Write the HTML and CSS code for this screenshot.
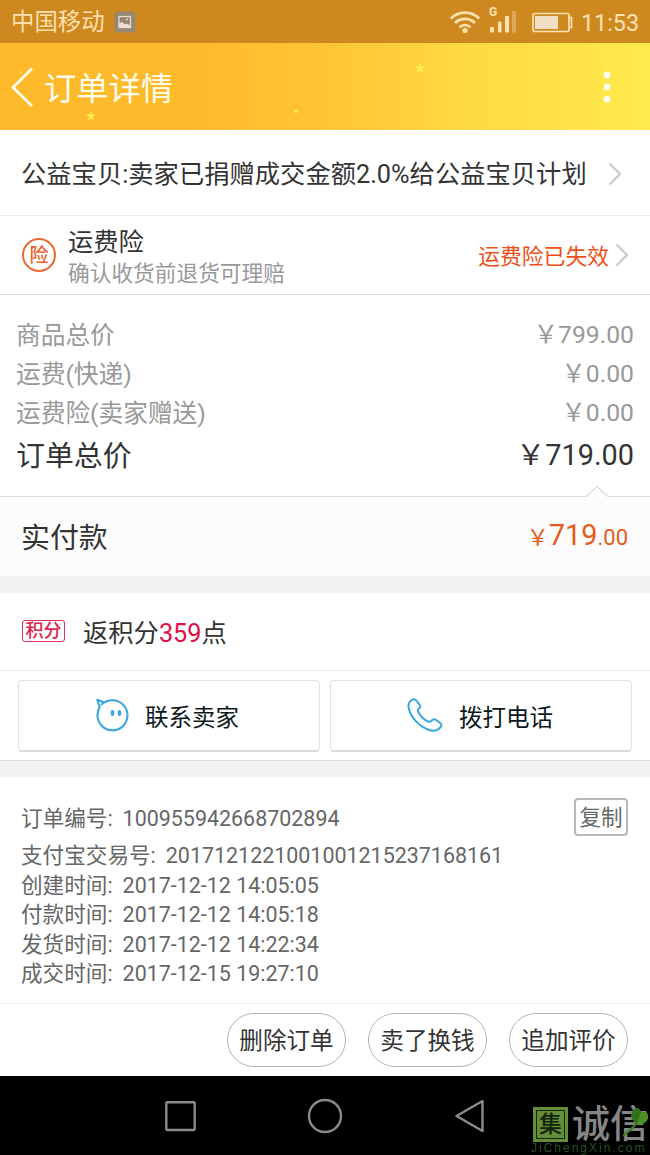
FILE: index.html
```html
<!DOCTYPE html>
<html lang="zh-CN">
<head>
<meta charset="utf-8">
<title>订单详情</title>
<link rel="stylesheet" href="styles.css">
</head>
<body>
<div class="screen">
  <div class="status">
    <span class="carrier">中国移动</span>
    <svg class="shot" width="22" height="22" viewBox="0 0 22 22"><rect x=".5" y=".5" width="21" height="21" rx="4" fill="#968770"/><rect x="5" y="5.500" width="11.500" height="11" fill="none" stroke="#eadfce" stroke-width="1.300"/><path d="M5 12.500l3-1.500 3 2.500 2-1 3 2v2H5z" fill="#eadfce"/><circle cx="13" cy="8.500" r="1" fill="#eadfce"/></svg>
    <div class="signals">
      <svg width="200" height="43" viewBox="0 0 200 43">
        <g fill="none" stroke="#ffe2b0" stroke-width="2.700"><path d="M.8 18.500a20 20 0 0 1 28.400 0"/><path d="M5 23a14 14 0 0 1 20 0"/><path d="M9.500 27.200a8 8 0 0 1 11 0"/></g>
        <circle cx="15" cy="30.500" r="2.600" fill="#ffe2b0"/>
        <g fill="#ffe2b0"><rect x="40" y="27" width="4" height="5.500" rx="1"/><rect x="48" y="21.500" width="3.500" height="11" rx="1"/><rect x="55" y="16" width="4" height="16.500" rx="1"/></g>
        <rect x="62" y="11" width="4" height="21.500" fill="#dda956"/>
        <rect x="83" y="13.500" width="36" height="18" rx="2" fill="none" stroke="#ffe2b0" stroke-width="1.700"/>
        <path d="M119 17.500h2.500v10H119" fill="none" stroke="#ffe2b0" stroke-width="1.700"/>
        <rect x="85" y="16" width="23" height="13" fill="#f3dfc3"/>
        <text class="net" x="39" y="16">G</text>
        <text class="clock" x="131" y="31" textLength="58" lengthAdjust="spacingAndGlyphs">11:53</text>
      </svg>
    </div>
  </div>

  <div class="header">
    <svg class="back" width="22" height="42" viewBox="0 0 22 42"><path d="M21 2.500L2 21.500l19 18.500" fill="none" stroke="#fffef0" stroke-width="2.600"/></svg>
    <h1>订单详情</h1>
    <svg class="more" width="8" height="32" viewBox="0 0 8 32"><g fill="#fffef0"><circle cx="4" cy="4" r="3.400"/><circle cx="4" cy="16" r="3.400"/><circle cx="4" cy="28.300" r="3.400"/></g></svg>
    <svg class="stars" width="650" height="87" viewBox="0 0 650 87">
      <defs><path id="star" d="M0-5l1.400 3.200 3.600.3-2.700 2.400.8 3.500L0 2.600l-3.100 1.800.8-3.500L-5-1.500l3.600-.3z"/></defs>
      <use href="#star" x="91" y="73" fill="#ffe94f"/>
      <use href="#star" x="420" y="25" fill="#fff05a"/>
      <use href="#star" x="607" y="13" fill="#fff04d" opacity=".6"/>
      <path d="M293 69.500q3-6 6 0z" fill="#ffe94f"/><path d="M18 28l4 1-1 2z" fill="#ffe94f"/>
    </svg>
  </div>

  <div class="charity">
    <span>公益宝贝:卖家已捐赠成交金额2.0%给公益宝贝计划</span>
    <svg width="14" height="24" viewBox="0 0 14 24"><path d="M1.500 1.500L12 12 1.500 22.500" fill="none" stroke="#cbcbcb" stroke-width="2.300"/></svg>
  </div>

  <div class="insurance">
    <span class="seal">险</span>
    <div class="cover"><div class="cover-name">运费险</div><div class="cover-note">确认收货前退货可理赔</div></div>
    <span class="expired">运费险已失效</span>
    <svg width="14" height="24" viewBox="0 0 14 24"><path d="M1.500 1.500L12 12 1.500 22.500" fill="none" stroke="#cbcbcb" stroke-width="2.300"/></svg>
  </div>

  <div class="prices">
    <div class="price"><span>商品总价</span><span class="sum">￥799.00</span></div>
    <div class="price"><span>运费(快递)</span><span class="sum">￥0.00</span></div>
    <div class="price"><span>运费险(卖家赠送)</span><span class="sum">￥0.00</span></div>
    <div class="price total"><span>订单总价</span><span class="sum">￥719.00</span></div>
  </div>

  <div class="paid">
    <svg class="notch" width="24" height="13" viewBox="0 0 24 13"><path d="M1 12L12 1.500 23 12v1H1z" fill="#fcfcfc"/><path d="M1 11.500L12 1.500l11 10" fill="none" stroke="#dcdcdc" stroke-width="1.200"/></svg>
    <span>实付款</span>
    <span class="amount">￥<b>719</b>.00</span>
  </div>

  <div class="points"><span class="tag">积分</span><span>返积分<em>359</em>点</span></div>

  <div class="contact">
    <div class="call">
      <svg width="34" height="34" viewBox="0 0 34 34"><path d="M6.500 6.500Q11 2.300 17.500 2.300A15 15 0 1 1 2.500 17.300q0-4.500 2.200-8L2.300 1.800 8.500 4.200" fill="none" stroke="#3aa5df" stroke-width="2.100" stroke-linejoin="round" stroke-linecap="round"/><ellipse cx="17.500" cy="15" rx="1.800" ry="3" fill="#3aa5df"/><ellipse cx="24.500" cy="15" rx="1.800" ry="3" fill="#3aa5df"/></svg>
      <span>联系卖家</span>
    </div>
    <div class="call">
      <svg width="36" height="34" viewBox="0 0 36 34"><path d="M4 2.500Q7-.2 9.300 2.500l3.500 4.700q1 1.500-.4 2.800c-2 1.500-2 2.500-.7 4.700 2 3.500 5.200 6.800 9 8.600 1.700.8 2.800.5 4-.8 1.300-1.500 2.700-1.600 4-.7l4.200 3q2.500 2 .7 4.200C31 32.300 27 33.400 23 32.200 12.500 29 3.500 19.500 1.600 9.500 1 6.500 2 4 4 2.500z" fill="none" stroke="#3aa5df" stroke-width="2"/></svg>
      <span>拨打电话</span>
    </div>
  </div>

  <div class="details">
    <div class="first"><span>订单编号:</span><span class="value">100955942668702894</span><span class="copy">复制</span></div>
    <div><span>支付宝交易号:</span><span class="value">2017121221001001215237168161</span></div>
    <div><span>创建时间:</span><span class="value">2017-12-12 14:05:05</span></div>
    <div><span>付款时间:</span><span class="value">2017-12-12 14:05:18</span></div>
    <div><span>发货时间:</span><span class="value">2017-12-12 14:22:34</span></div>
    <div><span>成交时间:</span><span class="value">2017-12-15 19:27:10</span></div>
  </div>

  <div class="actions"><span>删除订单</span><span>卖了换钱</span><span>追加评价</span></div>

  <div class="nav">
    <svg width="650" height="79" viewBox="0 0 650 79"><g fill="none" stroke="#8a8a8a" stroke-width="2.400" stroke-linejoin="round"><rect x="166.300" y="26.300" width="28.400" height="27.700" rx="1"/><circle cx="325" cy="40" r="16"/><path d="M456.500 40L482.500 25v30z"/></g></svg>
    <div class="mark">
      <div class="mark-top"><span class="mark-logo">集</span><span class="mark-name">诚信</span></div>
      <div class="mark-url">JiChengXin.com</div>
      <svg class="leaf" width="28" height="32" viewBox="0 0 28 32"><path d="M1 30Q9 24 15 17" fill="none" stroke="#3c7a20" stroke-width="2"/><path d="M15 18Q5 11 12 3q5-3 7 3 8-1 7 6-2 7-11 6z" fill="#32701b"/><path d="M15 18L19 6q8-1 7 6-2 7-11 6z" fill="#4c9127"/></svg>
    </div>
  </div>
</div>
</body>
</html>
```

FILE: styles.css
```css
* { box-sizing: border-box; }
body {
  margin: 0;
  background: #fff;
  color: #333;
  font-family: Roboto, "Noto Sans CJK SC", sans-serif;
}
svg { display: block; flex: none; }
.screen { width: 650px; height: 1155px; overflow: hidden; white-space: nowrap; }

.status { display: flex; align-items: center; height: 43px; padding-left: 11px; background: #cd8920; }
.carrier { width: 103px; padding-top: 1px; color: #ffdfad; font-size: 23.4px; line-height: 42px; }
.signals { margin-left: auto; }
.net { fill: #ffe2b0; font-size: 12px; font-weight: 700; }
.clock { fill: #ffe2b0; font-size: 24px; }

.header {
  position: relative;
  display: flex;
  align-items: center;
  height: 87px;
  padding: 0 39px 0 11px;
  background: linear-gradient(90deg, #ffba2b 0%, #ffba2b 30%, #ffc532 50%, #ffd83f 70%, #ffea4c 100%);
}
.header h1 { margin: 4px 0 0 11px; color: #fffef0; font-size: 32.3px; font-weight: 400; line-height: 40px; }
.more { margin-left: auto; }
.stars { position: absolute; left: 0; top: 0; }

.charity {
  display: flex;
  align-items: center;
  justify-content: space-between;
  height: 86px;
  padding: 2px 28px 0 21px;
  border-bottom: 1px solid #ebebeb;
  font-size: 25.3px;
  line-height: 34px;
}
.charity span { padding-top: 3px; }

.insurance { display: flex; align-items: center; height: 79px; padding: 0 21px 0 22px; border-bottom: 1px solid #dedede; }
.seal {
  width: 34px;
  height: 34px;
  border: 2px solid #e96b35;
  border-radius: 50%;
  color: #e8622b;
  font-size: 19px;
  font-weight: 500;
  line-height: 31px;
  text-align: center;
}
.cover { margin-left: 12px; padding-top: 4px; }
.cover-name { font-size: 25.3px; line-height: 33px; }
.cover-note { color: #999; font-size: 21.7px; line-height: 30px; }
.expired { margin: 4px 6px 0 auto; color: #ee4f18; font-size: 21.8px; line-height: 30px; }

.prices { height: 202px; padding: 21px 16px 0; border-bottom: 1px solid #dcdcdc; }
.price { display: flex; justify-content: space-between; color: #999; font-size: 24.7px; line-height: 39px; }
.price.total { color: #333; font-size: 28.9px; line-height: 46px; }
.sum { margin-top: -1px; }

.paid {
  position: relative;
  display: flex;
  align-items: center;
  justify-content: space-between;
  height: 79px;
  padding: 0 22px 3px 21px;
  background: #fcfcfc;
  font-size: 28.9px;
}
.notch { position: absolute; left: 585px; top: -12px; }
.amount { color: #e65a1c; font-size: 22px; }
.amount b { font-size: 28.9px; font-weight: 400; }

.points {
  display: flex;
  align-items: center;
  height: 95px;
  padding: 0 22px 1px;
  border-top: 17px solid #f2f2f2;
  border-bottom: 1px solid #ebebeb;
  font-size: 25.3px;
}
.points em { color: #dd0f45; font-style: normal; }
.tag {
  width: 43px;
  height: 22px;
  margin: 0 18px 0 0;
  border: 1px solid #da315e;
  border-radius: 3px;
  color: #da234f;
  font-size: 18px;
  font-weight: 500;
  line-height: 20px;
  text-align: center;
}

.contact { display: flex; gap: 10px; height: 90px; padding: 9px 18px 0; border-bottom: 1px solid #dcdcdc; }
.call {
  display: flex;
  flex: 1;
  align-items: center;
  gap: 16px;
  height: 72px;
  padding-left: 77px;
  border: 1px solid #e2e2e2;
  border-bottom: 2px solid #dadada;
  border-radius: 4px;
  color: #0b1820;
  font-size: 23.5px;
}
.call svg { margin: -1px 0 0 -1px; }
.call span { padding-top: 1px; }

.details {
  height: 243px;
  padding: 23px 22px 0 21px;
  border-top: 16px solid #f2f2f2;
  border-bottom: 1px solid #f1f1f1;
  color: #666;
  font-size: 21.6px;
  line-height: 29.5px;
}
.details > div { display: flex; gap: 10px; }
.details .first { height: 41px; line-height: 38px; }
.value { font-size: 21.45px; }
.copy {
  width: 54px;
  height: 38px;
  margin: -2px 0 0 auto;
  border: 2px solid #b9b9b9;
  border-radius: 4px;
  line-height: 36px;
  text-align: center;
}

.actions { display: flex; justify-content: flex-end; gap: 22px; height: 72px; padding: 9px 22px 0; }
.actions span {
  width: 119px;
  height: 54px;
  border: 1px solid #b3b3b3;
  border-radius: 27px;
  font-size: 23.6px;
  line-height: 55px;
  text-align: center;
}

.nav { position: relative; height: 79px; background: #000; }
.mark { position: absolute; left: 531px; top: 30px; width: 119px; }
.mark-top { display: flex; align-items: center; height: 36px; padding-left: 2px; }
.mark-logo {
  width: 35px;
  height: 35px;
  border: 3px solid #638d37;
  outline: 1px solid #17270b;
  outline-offset: -4px;
  background: #638d37;
  color: #14240c;
  font-size: 23px;
  font-weight: 500;
  line-height: 29px;
  text-align: center;
}
.mark-name { margin-left: 4px; color: #868686; font-size: 38px; font-weight: 500; line-height: 36px; }
.mark-url {
  color: #24541a;
  font-family: "Liberation Sans", sans-serif;
  font-size: 12px;
  letter-spacing: 2px;
  line-height: 12px;
}
.leaf { position: absolute; right: 0; top: 0; }
```
